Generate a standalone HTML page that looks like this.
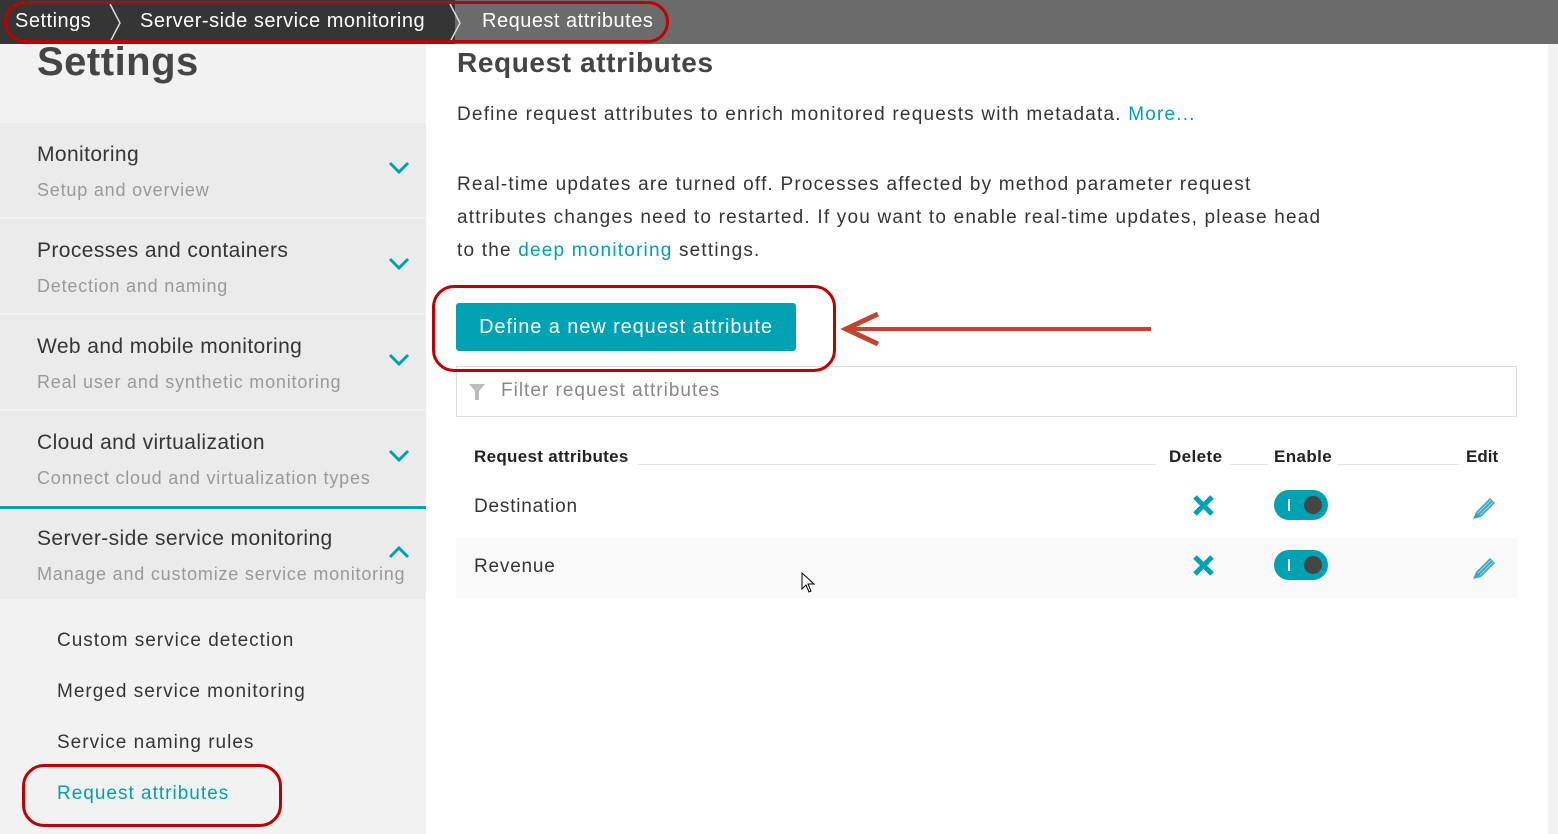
<!DOCTYPE html>
<html><head><meta charset="utf-8"><style>
*{box-sizing:border-box;margin:0;padding:0}
body{width:1558px;height:834px;overflow:hidden;background:#f2f2f2;font-family:"Liberation Sans",sans-serif;position:relative;color:#353535}
.abs{position:absolute;white-space:nowrap}
.top{left:0;top:0;width:1558px;height:44px;background:#6b6b6b}
.topd{left:0;top:0;width:455px;height:44px;background:#353535}
.bc{color:#fff;font-size:20px;top:10px;letter-spacing:0.5px}
.left{left:0;top:44px;width:426px;height:790px;background:#f2f2f2}
.right{left:426px;top:44px;width:1122px;height:790px;background:#fff}
.mi{left:0;width:426px;height:94px;background:#ebebeb}
.mt{font-size:21px;color:#353535;left:37px;letter-spacing:0.4px}
.ms{font-size:18px;color:#999;left:37px;letter-spacing:0.8px}
.chev{left:388px}
.sub{font-size:19px;left:57px;color:#353535;letter-spacing:1px}
.p{font-size:19px;color:#353535;left:457px;letter-spacing:1.2px}
a{color:#00a1b2;text-decoration:none}
.red{border:3px solid #c00000}
</style></head><body>
<div class="abs top"></div><div class="abs topd"></div>
<div class="abs bc" style="left:15px">Settings</div>
<svg class="abs" style="left:107px;top:2px" width="16" height="42"><path d="M3 2 L13 21 L3 40" stroke="#ddd" stroke-width="1.5" fill="none"/></svg>
<div class="abs bc" style="left:140px">Server-side service monitoring</div>
<svg class="abs" style="left:447px;top:2px" width="16" height="42"><path d="M3 2 L13 21 L3 40" stroke="#ddd" stroke-width="1.5" fill="none"/></svg>
<div class="abs bc" style="left:482px">Request attributes</div>
<div class="abs red" style="left:4px;top:1px;width:665px;height:42px;border-radius:21px"></div>

<div class="abs left"></div>
<div class="abs" style="left:37px;top:40px;font-size:40px;color:#454545;font-weight:bold;letter-spacing:0.5px">Settings</div>

<div class="abs mi" style="top:123px"></div>
<div class="abs mt" style="top:143px">Monitoring</div><div class="abs ms" style="top:180px">Setup and overview</div>
<div class="abs mi" style="top:219px"></div>
<div class="abs mt" style="top:239px">Processes and containers</div><div class="abs ms" style="top:276px">Detection and naming</div>
<div class="abs mi" style="top:315px"></div>
<div class="abs mt" style="top:335px">Web and mobile monitoring</div><div class="abs ms" style="top:372px">Real user and synthetic monitoring</div>
<div class="abs mi" style="top:411px"></div>
<div class="abs mt" style="top:431px">Cloud and virtualization</div><div class="abs ms" style="top:468px">Connect cloud and virtualization types</div>
<div class="abs" style="left:0;top:506px;width:426px;height:3px;background:#00a1b2"></div>
<div class="abs mi" style="top:509px;height:90px"></div>
<div class="abs mt" style="top:527px">Server-side service monitoring</div><div class="abs ms" style="top:564px">Manage and customize service monitoring</div>
<svg class="abs chev" style="top:160px" width="22" height="16"><path d="M2 3 L11 12 L20 3" stroke="#00a1b2" stroke-width="3" fill="none"/></svg>
<svg class="abs chev" style="top:256px" width="22" height="16"><path d="M2 3 L11 12 L20 3" stroke="#00a1b2" stroke-width="3" fill="none"/></svg>
<svg class="abs chev" style="top:352px" width="22" height="16"><path d="M2 3 L11 12 L20 3" stroke="#00a1b2" stroke-width="3" fill="none"/></svg>
<svg class="abs chev" style="top:448px" width="22" height="16"><path d="M2 3 L11 12 L20 3" stroke="#00a1b2" stroke-width="3" fill="none"/></svg>
<svg class="abs chev" style="top:544px" width="22" height="16"><path d="M2 13 L11 4 L20 13" stroke="#00a1b2" stroke-width="3" fill="none"/></svg>
<div class="abs sub" style="top:630px">Custom service detection</div>
<div class="abs sub" style="top:681px">Merged service monitoring</div>
<div class="abs sub" style="top:732px">Service naming rules</div>
<div class="abs sub" style="top:783px;color:#00a1b2">Request attributes</div>
<div class="abs red" style="left:22px;top:764px;width:260px;height:63px;border-radius:22px"></div>

<div class="abs right"></div>
<div class="abs" style="left:457px;top:47px;font-size:28px;color:#454545;font-weight:bold;letter-spacing:0.6px">Request attributes</div>
<div class="abs p" style="top:104px">Define request attributes to enrich monitored requests with metadata. <a>More...</a></div>
<div class="abs p" style="top:168px;line-height:33px">Real-time updates are turned off. Processes affected by method parameter request<br>attributes changes need to restarted. If you want to enable real-time updates, please head<br>to the <a>deep monitoring</a> settings.</div>
<div class="abs" style="left:456px;top:303px;width:340px;height:48px;background:#00a1b2;border-radius:3px;color:#fff;font-size:20px;line-height:48px;text-align:center;letter-spacing:0.9px">Define a new request attribute</div>
<svg class="abs" style="left:840px;top:310px" width="315" height="40"><path d="M6 19 H311" stroke="#c0452f" stroke-width="4"/><path d="M38 4 L6 19 L38 34" stroke="#c0452f" stroke-width="5" fill="none"/></svg>
<div class="abs" style="left:456px;top:366px;width:1061px;height:51px;border:1px solid #ddd;background:#fff"></div>
<div class="abs red" style="left:432px;top:285px;width:404px;height:87px;border-radius:22px"></div>
<svg class="abs" style="left:468px;top:383px" width="18" height="18"><path d="M1 1 H17 L11 8 V17 H7 V8 Z" fill="#bbb"/></svg>
<div class="abs" style="left:501px;top:380px;font-size:19px;color:#888;letter-spacing:1px">Filter request attributes</div>

<div class="abs" style="left:474px;top:447px;font-size:17px;font-weight:bold;color:#222;letter-spacing:0.3px">Request attributes</div>
<div class="abs" style="left:638px;top:464px;width:518px;height:1px;background:#e2e2e2"></div>
<div class="abs" style="left:1169px;top:447px;font-size:17px;font-weight:bold;color:#222;letter-spacing:0.4px">Delete</div>
<div class="abs" style="left:1230px;top:464px;width:38px;height:1px;background:#e2e2e2"></div>
<div class="abs" style="left:1274px;top:447px;font-size:17px;font-weight:bold;color:#222;letter-spacing:0.4px">Enable</div>
<div class="abs" style="left:1337px;top:464px;width:122px;height:1px;background:#e2e2e2"></div>
<div class="abs" style="left:1466px;top:447px;font-size:17px;font-weight:bold;color:#222">Edit</div>

<div class="abs" style="left:456px;top:538px;width:1061px;height:60px;background:#f9f9f9"></div>
<div class="abs" style="left:474px;top:496px;font-size:19px;letter-spacing:0.8px">Destination</div>
<div class="abs" style="left:474px;top:556px;font-size:19px;letter-spacing:0.8px">Revenue</div>

<svg class="abs" style="left:1192px;top:494px" width="23" height="23"><path d="M3 3 L20 20 M20 3 L3 20" stroke="#00a1b2" stroke-width="5"/></svg>
<svg class="abs" style="left:1192px;top:554px" width="23" height="23"><path d="M3 3 L20 20 M20 3 L3 20" stroke="#00a1b2" stroke-width="5"/></svg>
<div class="abs" style="left:1274px;top:490px;width:54px;height:30px;border-radius:15px;background:#00a1b2"><div class="abs" style="left:14px;top:9px;width:2px;height:12px;background:#fff"></div><div class="abs" style="left:30px;top:6px;width:18px;height:18px;border-radius:50%;background:#454545"></div></div>
<div class="abs" style="left:1274px;top:550px;width:54px;height:30px;border-radius:15px;background:#00a1b2"><div class="abs" style="left:14px;top:9px;width:2px;height:12px;background:#fff"></div><div class="abs" style="left:30px;top:6px;width:18px;height:18px;border-radius:50%;background:#454545"></div></div>
<svg class="abs" style="left:1471px;top:495px" width="26" height="24"><path d="M5 17 L19 3 L24 8 L10 22 Z" fill="#3aa6c4"/><path d="M5 17 L10 22 L2 24 Z" fill="#3aa6c4"/><path d="M7 18 L20 5 M9 20 L22 7" stroke="#bfe4ee" stroke-width="0.8"/></svg>
<svg class="abs" style="left:1471px;top:555px" width="26" height="24"><path d="M5 17 L19 3 L24 8 L10 22 Z" fill="#3aa6c4"/><path d="M5 17 L10 22 L2 24 Z" fill="#3aa6c4"/><path d="M7 18 L20 5 M9 20 L22 7" stroke="#bfe4ee" stroke-width="0.8"/></svg>
<svg class="abs" style="left:801px;top:572px" width="16" height="22"><path d="M1 1 V17 L5 13 L8 20 L10 19 L7 12 H13 Z" fill="#fff" stroke="#000" stroke-width="1"/></svg>
</body></html>
